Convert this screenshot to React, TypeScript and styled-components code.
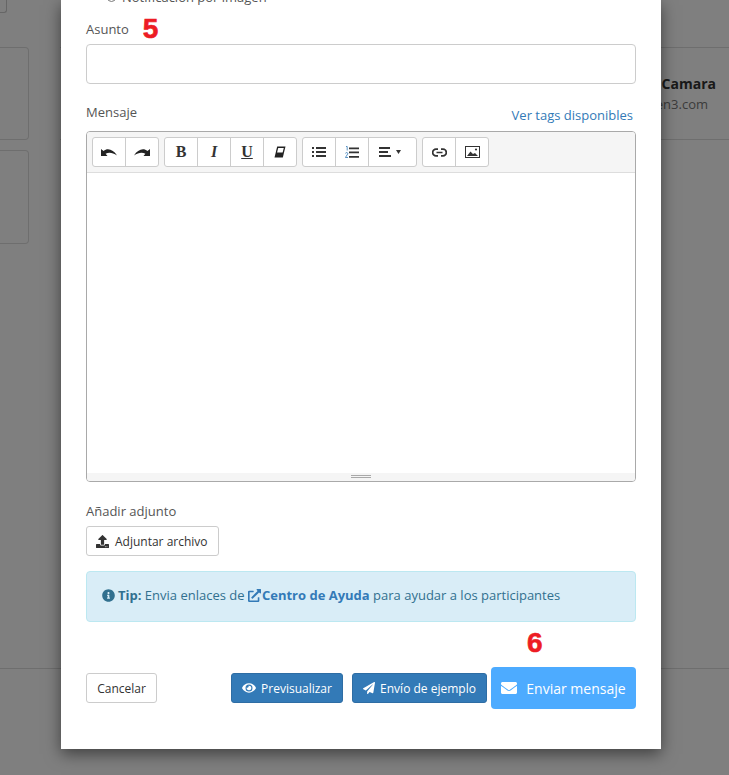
import React from "react";
import styled, { createGlobalStyle } from "styled-components";
import {
  FaEnvelope,
  FaExternalLinkAlt,
  FaEye,
  FaInfoCircle,
  FaPaperPlane,
  FaUpload,
} from "react-icons/fa";

const GlobalStyle = createGlobalStyle`
  html, body {
    margin: 0;
    padding: 0;
    background: #fff;
  }
  * {
    box-sizing: border-box;
  }
  body {
    font-family: "Open Sans", "Liberation Sans", sans-serif;
    color: #333;
  }
`;

const Page = styled.div`
  position: relative;
  width: 729px;
  height: 775px;
  overflow: hidden;
  background: #fff;
`;

/* page behind the modal */
const BackTop = styled.div`
  display: flex;
  height: 669px;
  border-bottom: 1px solid #ddd;
`;

const BackLeft = styled.div`
  width: 29px;
  flex: none;
  display: flex;
  flex-direction: column;
`;

const SmallBox = styled.div`
  width: 7px;
  height: 13px;
  border: 1px solid #ccc;
  border-top: 0;
  border-left: 0;
  border-radius: 0 0 3px 0;
  margin-bottom: 34px;
`;

const BackCard = styled.div<{ $h: number }>`
  height: ${(p) => p.$h}px;
  margin-bottom: 10px;
  border: 1px solid #ddd;
  border-left: 0;
  border-radius: 0 4px 4px 0;
`;

const BackRight = styled.div`
  flex: 1;
  margin-left: 31px;
  padding-top: 47px;
`;

const ContactRow = styled.div`
  height: 93px;
  border: 1px solid #ddd;
  border-width: 1px 0;
  display: flex;
  flex-direction: column;
  justify-content: center;
  text-align: right;
`;

const ContactName = styled.div`
  font-size: 14px;
  line-height: 20px;
  font-weight: 700;
  padding-right: 13px;
`;

const ContactMail = styled.div`
  font-size: 13px;
  line-height: 20px;
  color: #777;
  padding-right: 21px;
`;

const Overlay = styled.div`
  position: absolute;
  inset: 0;
  background: rgba(0, 0, 0, 0.5);
`;

const Modal = styled.div`
  position: relative;
  width: 600px;
  height: 749px;
  margin-left: 61px;
  padding: 0 25px 40px;
  background: #fff;
  box-shadow: 0 5px 15px rgba(0, 0, 0, 0.5);
  overflow: hidden;
  display: flex;
  flex-direction: column;
  justify-content: flex-end;
  > * {
    flex: none;
  }
`;

const RadioRow = styled.div`
  display: flex;
  align-items: center;
  gap: 6px;
  height: 18px;
  margin-bottom: 11px;
  padding-left: 21px;
  font-size: 13px;
  color: #555;
`;

const RadioDot = styled.span`
  width: 9px;
  height: 9px;
  border: 1px solid #777;
  border-radius: 50%;
`;

const Label = styled.div`
  font-size: 13px;
  line-height: 18px;
  color: #555;
`;

const SubjectLabel = styled(Label)`
  display: flex;
  align-items: center;
  height: 24px;
  gap: 14px;
  margin-bottom: 3px;
`;

const StepNumber = styled.span`
  font-family: "Liberation Sans", Arial, sans-serif;
  font-size: 28px;
  line-height: 24px;
  font-weight: 700;
  color: #ed1c24;
  -webkit-text-stroke: 0.6px #ed1c24;
`;

const FloatingStep = styled(StepNumber)`
  position: absolute;
  left: 466px;
  top: 631px;
`;

const TextInput = styled.input`
  display: block;
  width: 550px;
  height: 40px;
  padding: 6px 12px;
  background: #fff;
  border: 1px solid #ccc;
  border-radius: 4px;
`;

const MessageHead = styled.div`
  display: flex;
  justify-content: space-between;
  height: 47px;
  padding-top: 19px;
  padding-right: 3px;
`;

const TagsLink = styled.a`
  font-size: 13px;
  line-height: 18px;
  margin-top: 3px;
  color: #337ab7;
`;

const Editor = styled.div`
  width: 550px;
  height: 351px;
  border: 1px solid #a9a9a9;
  border-radius: 4px;
  display: flex;
  flex-direction: column;
  overflow: hidden;
`;

const Toolbar = styled.div`
  flex: none;
  height: 41px;
  padding: 5px 5px 0;
  display: flex;
  gap: 5px;
  align-items: flex-start;
  background: #f5f5f5;
  border-bottom: 1px solid #ddd;
`;

const ToolGroup = styled.div`
  display: flex;
  background: #fff;
  border: 1px solid #ccc;
  border-radius: 3px;
  height: 30px;
`;

const ToolButton = styled.button<{ $wide?: boolean }>`
  width: ${(p) => (p.$wide ? "48px" : "33px")};
  padding: 0 ${(p) => (p.$wide ? "5px" : "0")} 0 0;
  border: 0;
  border-left: 1px solid #ccc;
  background: none;
  color: #333;
  display: flex;
  align-items: center;
  justify-content: center;
  gap: 5px;
  &:first-child {
    width: 32px;
    border-left: 0;
  }
`;

const Glyph = styled.span<{ $italic?: boolean; $under?: boolean }>`
  font-family: "Liberation Serif", "Times New Roman", serif;
  font-size: 16px;
  font-weight: 700;
  font-style: ${(p) => (p.$italic ? "italic" : "normal")};
  text-decoration: ${(p) => (p.$under ? "underline" : "none")};
`;

const EditArea = styled.div`
  flex: 1;
  background: #fff;
`;

const StatusBar = styled.div`
  flex: none;
  height: 8px;
  padding-top: 2px;
  background: #f5f5f5;
  display: flex;
  flex-direction: column;
  align-items: center;
`;

const GripLine = styled.span`
  display: block;
  width: 20px;
  height: 1px;
  margin-bottom: 1px;
  background: #a9a9a9;
`;

const AttachLabel = styled(Label)`
  margin-top: 20px;
  margin-bottom: 6px;
`;

const WhiteButton = styled.button`
  display: inline-flex;
  align-items: center;
  height: 30px;
  padding: 0 9px;
  gap: 6px;
  background: #fff;
  border: 1px solid #ccc;
  border-radius: 3px;
  color: #333;
  font-family: inherit;
  font-size: 12px;
  white-space: nowrap;
`;

const AttachButton = styled(WhiteButton)`
  width: 133px;
`;

const TipBox = styled.div`
  height: 51px;
  margin-top: 15px;
  padding: 0 15px;
  background: #d9edf7;
  border: 1px solid #bce8f1;
  border-radius: 4px;
  color: #31708f;
  font-size: 13px;
  line-height: 47px;
  white-space: nowrap;
  svg {
    vertical-align: -2px;
  }
`;

const TipIcon = styled(FaInfoCircle)`
  margin-right: 3px;
`;

const TipLink = styled.b`
  color: #337ab7;
  svg {
    margin-right: 1px;
  }
`;

const Footer = styled.div`
  display: flex;
  align-items: center;
  height: 42px;
  margin-top: 45px;
`;

const CancelButton = styled(WhiteButton)`
  width: 71px;
  justify-content: center;
  padding: 0;
  margin-right: auto;
`;

const BlueButton = styled.button`
  display: inline-flex;
  align-items: center;
  justify-content: center;
  gap: 5px;
  height: 30px;
  padding: 0;
  background: #337ab7;
  border: 1px solid #2e6da4;
  border-radius: 3px;
  color: #fff;
  font-family: inherit;
  font-size: 12px;
`;

const PreviewButton = styled(BlueButton)`
  width: 112px;
  margin-right: 9px;
`;

const SampleButton = styled(BlueButton)`
  width: 135px;
  margin-right: 4px;
`;

const SendButton = styled.button`
  display: inline-flex;
  align-items: center;
  justify-content: center;
  gap: 9px;
  width: 145px;
  height: 42px;
  padding: 0;
  background: #4dabff;
  border: 0;
  border-radius: 4px;
  color: #fff;
  font-family: inherit;
  font-size: 14px;
`;

const Undo = ({ flip }: { flip?: boolean }) => (
  <svg width="16" height="9" viewBox="0 0 16 9" style={flip ? { transform: "scaleX(-1)" } : undefined}>
    <path
      d="M0 1 L0 8 L6.5 8 L4.6 5.8 C7.5 4 11.5 4.2 16 7.5 C12.5 1.5 6.5 -0.6 2.6 3 Z"
      fill="#222"
    />
  </svg>
);

const Eraser = () => (
  <svg width="12" height="12" viewBox="0 0 12 12">
    <path d="M3.2 0.5 L11.5 0.5 L8.8 11.5 L0.5 11.5 Z" fill="#222" />
    <path d="M4.2 2 L9.8 2 L8.6 6.5 L3.1 6.5 Z" fill="#fff" />
  </svg>
);

const Bullets = () => (
  <svg width="14" height="12" viewBox="0 0 14 12">
    <path d="M0 1h2v2H0zM0 5h2v2H0zM0 9h2v2H0zM4 1h10v2H4zM4 5h10v2H4zM4 9h10v2H4z" fill="#333" />
  </svg>
);

const Numbers = () => (
  <svg width="14" height="13" viewBox="0 0 14 13">
    <path d="M4 1.5h10v1.8H4zM4 5.5h10v1.8H4zM4 10h10v1.8H4z" fill="#333" />
    <path d="M1 0.5 L2.2 0.5 L2.2 4.5 M0.4 7.5 C0.6 6.2 3 6.2 2.8 7.8 L0.4 11.5 L3 11.5" fill="none" stroke="#337ab7" strokeWidth="0.8" />
  </svg>
);

const AlignLines = () => (
  <svg width="12" height="10" viewBox="0 0 12 10">
    <path d="M0 0h11v2H0zM0 4h9v2H0zM0 8h12v2H0z" fill="#333" />
  </svg>
);

const Caret = () => (
  <svg width="5" height="4" viewBox="0 0 5 4">
    <path d="M0 0h5L2.5 4z" fill="#333" />
  </svg>
);

const LinkIcon = () => (
  <svg width="15" height="9" viewBox="0 0 15 9">
    <path
      d="M6 1.2H4a3.3 3.3 0 0 0 0 6.6h2M9 1.2h2a3.3 3.3 0 0 1 0 6.6H9M4.5 4.5h6"
      fill="none"
      stroke="#333"
      strokeWidth="1.7"
    />
  </svg>
);

const ImageIcon = () => (
  <svg width="15" height="12" viewBox="0 0 15 12">
    <rect x="0.5" y="0.5" width="14" height="11" fill="#fff" stroke="#333" />
    <path d="M2 10 L5.5 5.5 L8 8 L10 7 L13 10 Z" fill="#333" />
    <circle cx="11" cy="3.5" r="1.1" fill="#333" />
  </svg>
);

export default function App() {
  return (
    <Page>
      <GlobalStyle />
      <BackTop>
        <BackLeft>
          <SmallBox />
          <BackCard $h={93} />
          <BackCard $h={94} />
        </BackLeft>
        <BackRight>
          <ContactRow>
            <ContactName>Camara</ContactName>
            <ContactMail>en3.com</ContactMail>
          </ContactRow>
        </BackRight>
      </BackTop>

      <Overlay>
        <Modal>
          <RadioRow>
            <RadioDot />
            Notificación por imagen
          </RadioRow>
          <SubjectLabel>
            Asunto
            <StepNumber>5</StepNumber>
          </SubjectLabel>
          <TextInput type="text" />

          <MessageHead>
            <Label>Mensaje</Label>
            <TagsLink>Ver tags disponibles</TagsLink>
          </MessageHead>
          <Editor>
            <Toolbar>
              <ToolGroup>
                <ToolButton><Undo /></ToolButton>
                <ToolButton><Undo flip /></ToolButton>
              </ToolGroup>
              <ToolGroup>
                <ToolButton><Glyph>B</Glyph></ToolButton>
                <ToolButton><Glyph $italic>I</Glyph></ToolButton>
                <ToolButton><Glyph $under>U</Glyph></ToolButton>
                <ToolButton><Eraser /></ToolButton>
              </ToolGroup>
              <ToolGroup>
                <ToolButton><Bullets /></ToolButton>
                <ToolButton><Numbers /></ToolButton>
                <ToolButton $wide><AlignLines /><Caret /></ToolButton>
              </ToolGroup>
              <ToolGroup>
                <ToolButton><LinkIcon /></ToolButton>
                <ToolButton><ImageIcon /></ToolButton>
              </ToolGroup>
            </Toolbar>
            <EditArea />
            <StatusBar>
              <GripLine />
              <GripLine />
            </StatusBar>
          </Editor>

          <AttachLabel>Añadir adjunto</AttachLabel>
          <AttachButton>
            <FaUpload size={13} />
            Adjuntar archivo
          </AttachButton>

          <TipBox>
            <TipIcon size={13} />
            <b>Tip:</b> Envia enlaces de{" "}
            <TipLink>
              <FaExternalLinkAlt size={13} />
              Centro de Ayuda
            </TipLink>{" "}
            para ayudar a los participantes
          </TipBox>

          <FloatingStep>6</FloatingStep>
          <Footer>
            <CancelButton>Cancelar</CancelButton>
            <PreviewButton>
              <FaEye size={14} />
              Previsualizar
            </PreviewButton>
            <SampleButton>
              <FaPaperPlane size={12} />
              Envío de ejemplo
            </SampleButton>
            <SendButton>
              <FaEnvelope size={16} />
              Enviar mensaje
            </SendButton>
          </Footer>
        </Modal>
      </Overlay>
    </Page>
  );
}
